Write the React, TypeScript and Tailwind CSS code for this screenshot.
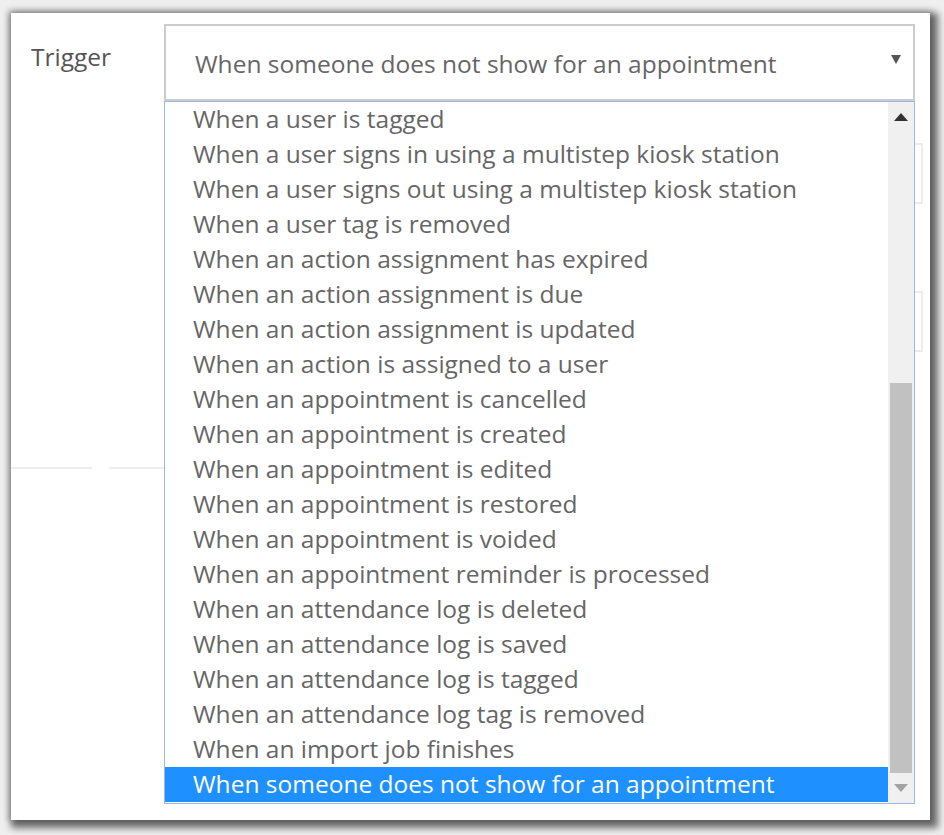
import React from 'react';

const options = [
  'When a user is tagged',
  'When a user signs in using a multistep kiosk station',
  'When a user signs out using a multistep kiosk station',
  'When a user tag is removed',
  'When an action assignment has expired',
  'When an action assignment is due',
  'When an action assignment is updated',
  'When an action is assigned to a user',
  'When an appointment is cancelled',
  'When an appointment is created',
  'When an appointment is edited',
  'When an appointment is restored',
  'When an appointment is voided',
  'When an appointment reminder is processed',
  'When an attendance log is deleted',
  'When an attendance log is saved',
  'When an attendance log is tagged',
  'When an attendance log tag is removed',
  'When an import job finishes',
  'When someone does not show for an appointment',
];

const selected = 'When someone does not show for an appointment';

export default function App() {
  return (
    <div
      className="w-[944px] h-[835px] bg-[#efefef] pt-[13px] pl-[11px] overflow-hidden"
      style={{ fontFamily: '"Open Sans", "Liberation Sans", sans-serif' }}
    >
      <div className="relative w-[919px] h-[807px] bg-white shadow-[4px_4px_7px_4px_rgba(0,0,0,0.55),-1px_-1px_6px_2px_rgba(0,0,0,0.2)]">
        {/* Trigger row */}
        <div className="flex pt-[11px]">
          <div className="w-[153px] pl-[20px] pt-[16px] text-[24.5px] leading-[34px] text-[#555]">Trigger</div>
          <div className="relative w-[751px] h-[77px] border-2 border-[#cccccc] flex items-center pl-[29px] pr-[12px]">
            <span className="flex-1 text-[24.5px] text-[#666] leading-none pt-[4px]">{selected}</span>
            <svg width="10" height="9" viewBox="0 0 10 9" className="-mt-[6px]">
              <path d="M0 0 L10 0 L5 9 Z" fill="#555" />
            </svg>
          </div>
        </div>

        {/* underlying form fields, hidden by the open list */}
        <div className="flex flex-col pl-[290px] pt-[42px] gap-[87px]">
          <div className="w-[622px] h-[61px] border-2 border-[#ececec]" />
          <div className="w-[622px] h-[61px] border-2 border-[#ececec]" />
        </div>
        <div className="flex mt-[115px] gap-[17px]">
          <div className="w-[81px] h-[2px] bg-[#eeeeee]" />
          <div className="w-[500px] h-[2px] bg-[#eeeeee]" />
        </div>

        {/* open dropdown list */}
        <div className="absolute left-[153px] top-[88px] w-[751px] h-[703px] border border-[#9cb6e6] bg-white flex">
          <ul className="flex-1 flex flex-col">
            {options.map((o) => (
              <li
                key={o}
                className={
                  o === selected
                    ? 'h-[35px] pl-[28px] flex items-center text-[24.5px] text-white bg-[#1e90ff]'
                    : 'h-[35px] pl-[28px] flex items-center text-[24.5px] text-[#666]'
                }
              >
                {o}
              </li>
            ))}
          </ul>
          <div className="w-[26px] bg-[#f0f0f0] flex flex-col items-center">
            <div className="h-[30px] flex items-center justify-center">
              <svg width="14" height="8" viewBox="0 0 14 8">
                <path d="M7 0 L14 8 L0 8 Z" fill="#333" />
              </svg>
            </div>
            <div className="flex-1 w-full flex flex-col justify-end px-[2px]">
              <div className="h-[390px] bg-[#c1c1c1]" />
            </div>
            <div className="h-[30px] flex items-center justify-center">
              <svg width="14" height="8" viewBox="0 0 14 8">
                <path d="M0 0 L14 0 L7 8 Z" fill="#a3a3a3" />
              </svg>
            </div>
          </div>
        </div>
      </div>
    </div>
  );
}
